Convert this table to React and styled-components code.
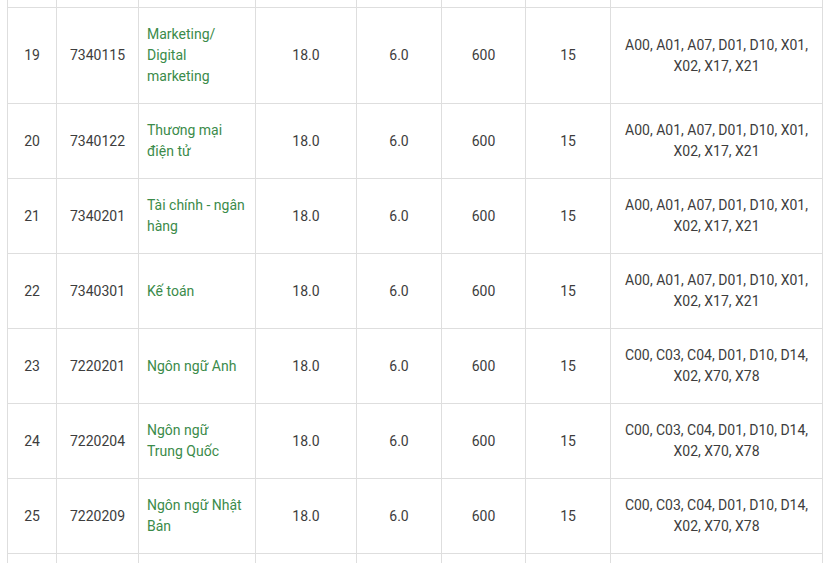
import styled, { createGlobalStyle } from 'styled-components'

const GlobalStyle = createGlobalStyle`
  html, body {
    margin: 0;
    padding: 0;
    background: #fff;
  }
  body {
    font-family: Roboto, "Liberation Sans", sans-serif;
  }
`

const Page = styled.div`
  width: 832px;
  height: 563px;
  overflow: hidden;
  padding-left: 7px;
  box-sizing: border-box;
`

const Table = styled.table`
  border-collapse: collapse;
  table-layout: fixed;
  width: 816px;
  font-size: 14px;
  line-height: 21px;
  color: #3d3d3d;
`

const Cell = styled.td`
  border: 1px solid #dedede;
  padding: ${p => (p.$left ? '16px 10px 16px 8px' : '16px 10px')};
  vertical-align: middle;
  text-align: ${p => (p.$left ? 'left' : 'center')};
  color: ${p => (p.$green ? '#3b8b4a' : '#3d3d3d')};
  word-wrap: break-word;
`

const StripCell = styled.td`
  border-left: 1px solid #dedede;
  border-right: 1px solid #dedede;
  padding: 0;
  height: ${p => p.$h}px;
`

const widths = [49, 82, 117, 101, 85, 84, 85, 212]

const groupA = 'A00, A01, A07, D01, D10, X01, X02, X17, X21'
const groupC = 'C00, C03, C04, D01, D10, D14, X02, X70, X78'

const rows = [
  ['19', '7340115', 'Marketing/ Digital marketing', groupA],
  ['20', '7340122', 'Thương mại điện tử', groupA],
  ['21', '7340201', 'Tài chính - ngân hàng', groupA],
  ['22', '7340301', 'Kế toán', groupA],
  ['23', '7220201', 'Ngôn ngữ Anh', groupC],
  ['24', '7220204', 'Ngôn ngữ Trung Quốc', groupC],
  ['25', '7220209', 'Ngôn ngữ Nhật Bản', groupC],
]

function Strip({ h }) {
  return (
    <tr>
      {widths.map((w, i) => (
        <StripCell key={i} $h={h} />
      ))}
    </tr>
  )
}

export default function App() {
  return (
    <Page>
      <GlobalStyle />
      <Table>
        <colgroup>
          {widths.map((w, i) => (
            <col key={i} style={{ width: w }} />
          ))}
        </colgroup>
        <tbody>
          <Strip h={7} />
          {rows.map(([no, code, name, groups]) => (
            <tr key={no}>
              <Cell>{no}</Cell>
              <Cell>{code}</Cell>
              <Cell $left $green>{name}</Cell>
              <Cell>18.0</Cell>
              <Cell>6.0</Cell>
              <Cell>600</Cell>
              <Cell>15</Cell>
              <Cell>{groups}</Cell>
            </tr>
          ))}
          <Strip h={20} />
        </tbody>
      </Table>
    </Page>
  )
}
